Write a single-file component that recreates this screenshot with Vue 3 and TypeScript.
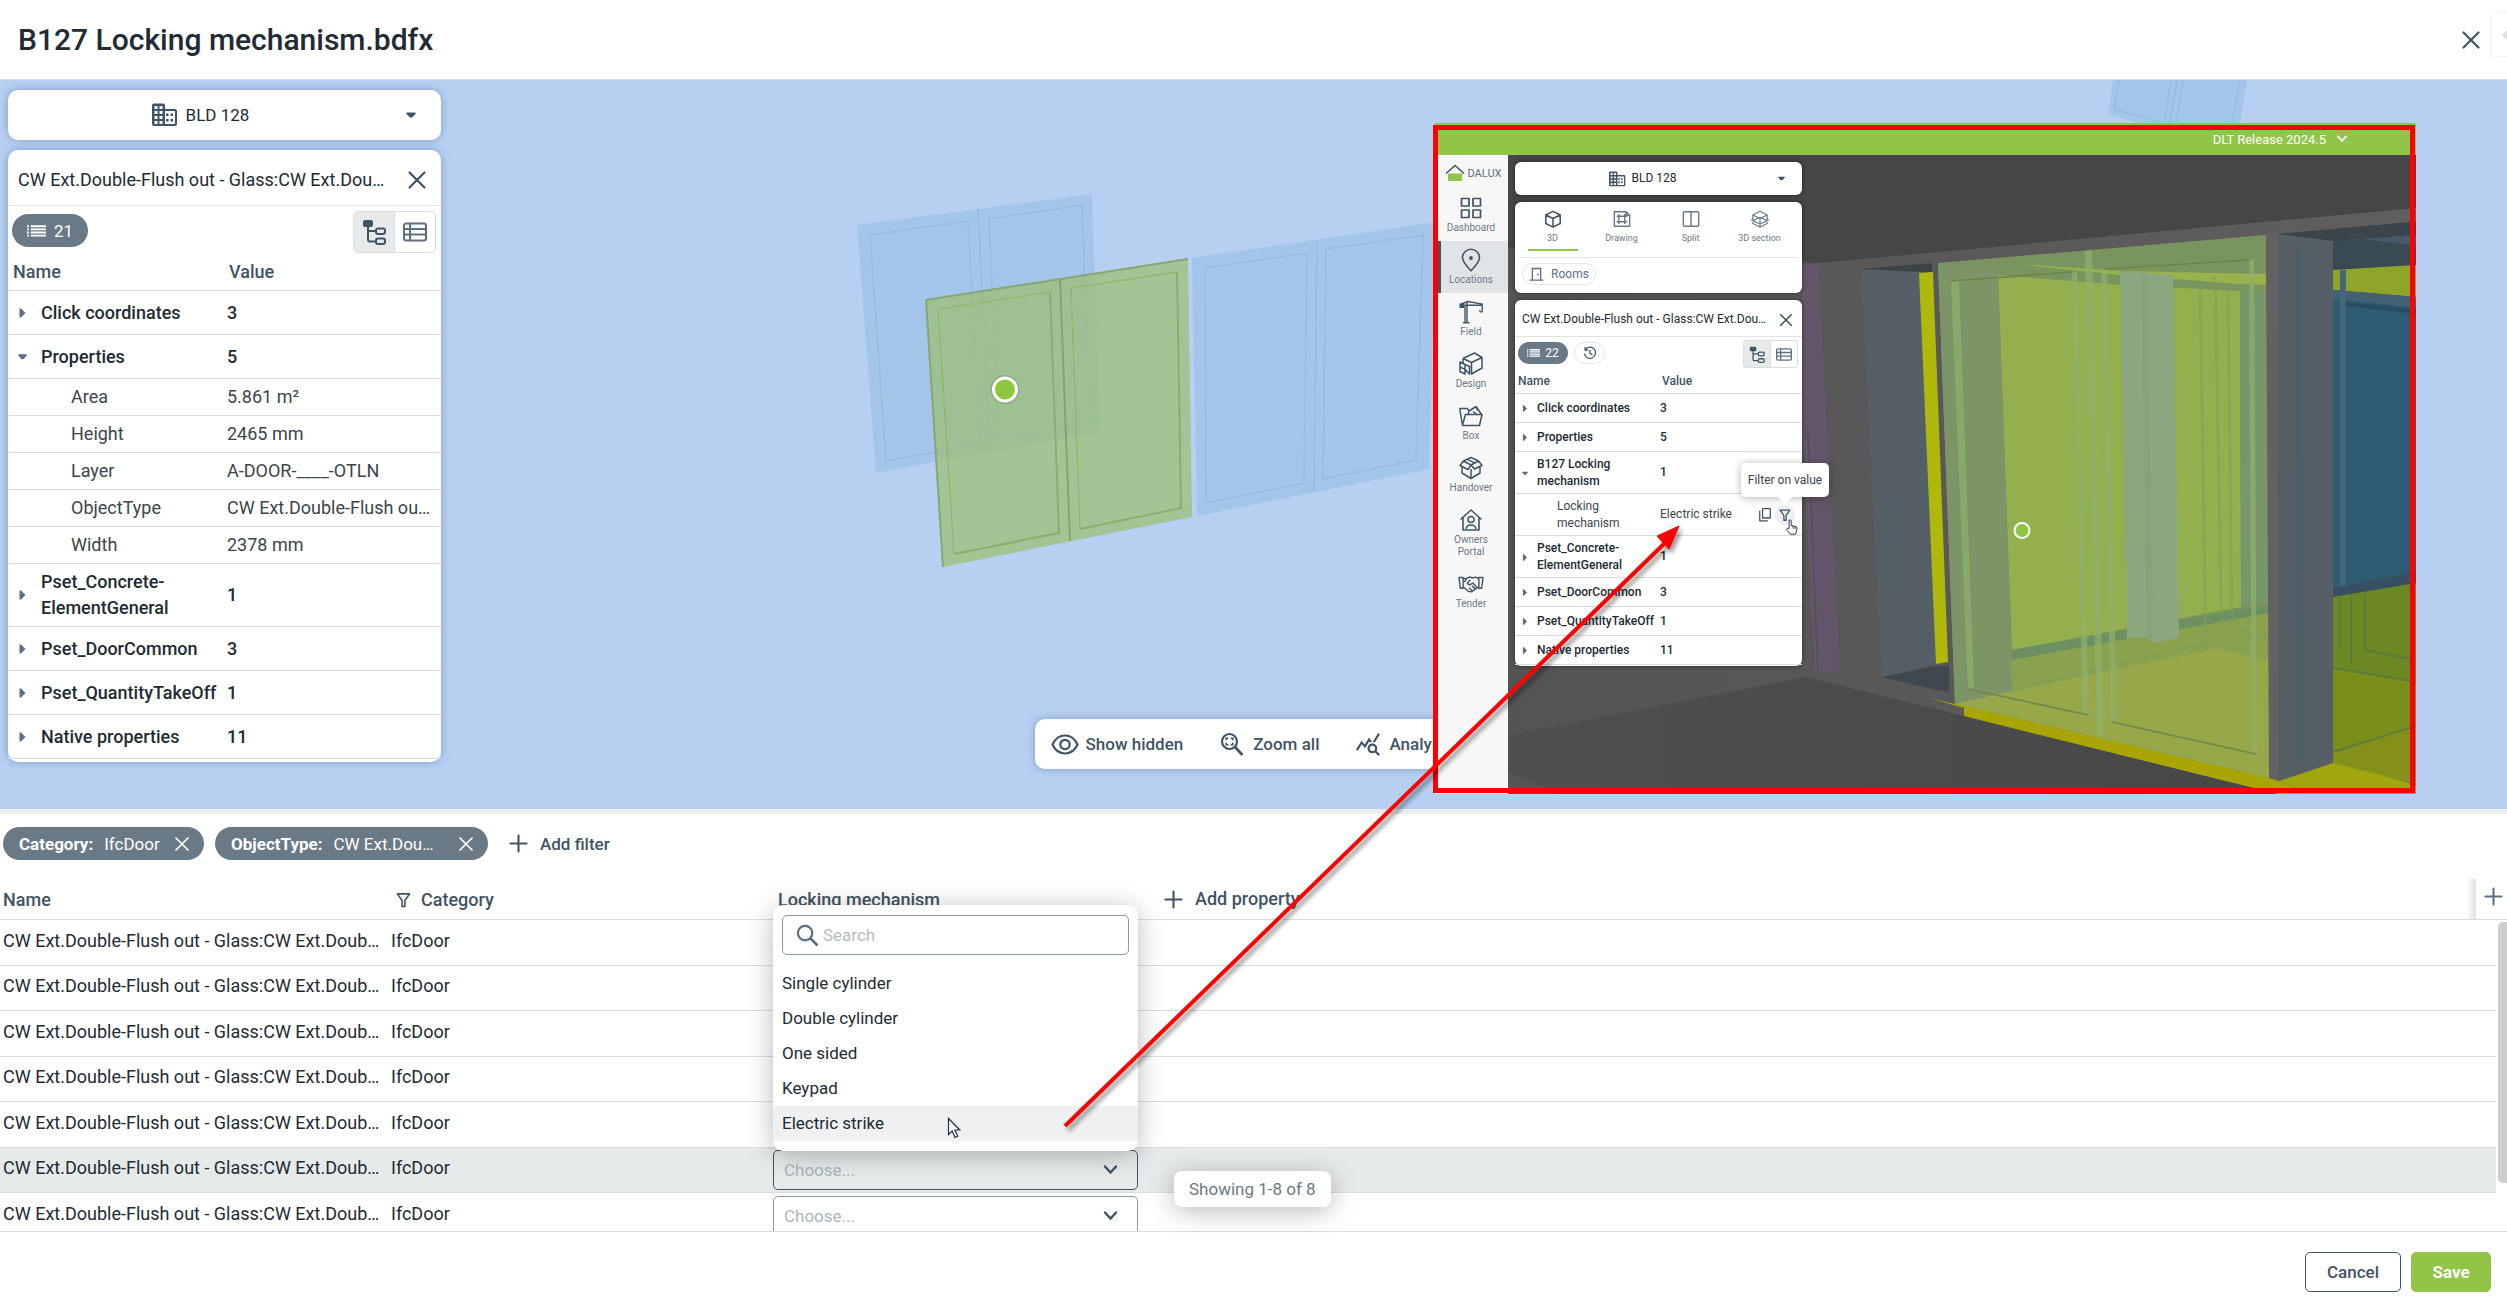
<script setup lang="ts">
import { ref } from 'vue'

interface PropertyRow {
  name: string
  value: string
  kind: 'group' | 'child'
  open?: boolean
  tall?: boolean
  actions?: boolean
}

const elementName = 'CW Ext.Double-Flush out - Glass:CW Ext.Dou…'

const properties: PropertyRow[] = [
  { name: 'Click coordinates', value: '3', kind: 'group' },
  { name: 'Properties', value: '5', kind: 'group', open: true },
  { name: 'Area', value: '5.861 m²', kind: 'child' },
  { name: 'Height', value: '2465 mm', kind: 'child' },
  { name: 'Layer', value: 'A-DOOR-____-OTLN', kind: 'child' },
  { name: 'ObjectType', value: 'CW Ext.Double-Flush ou…', kind: 'child' },
  { name: 'Width', value: '2378 mm', kind: 'child' },
  { name: 'Pset_Concrete-ElementGeneral', value: '1', kind: 'group', tall: true },
  { name: 'Pset_DoorCommon', value: '3', kind: 'group' },
  { name: 'Pset_QuantityTakeOff', value: '1', kind: 'group' },
  { name: 'Native properties', value: '11', kind: 'group' },
]

const insetProperties: PropertyRow[] = [
  { name: 'Click coordinates', value: '3', kind: 'group' },
  { name: 'Properties', value: '5', kind: 'group' },
  { name: 'B127 Locking mechanism', value: '1', kind: 'group', open: true, tall: true },
  { name: 'Locking mechanism', value: 'Electric strike', kind: 'child', tall: true, actions: true },
  { name: 'Pset_Concrete-ElementGeneral', value: '1', kind: 'group', tall: true },
  { name: 'Pset_DoorCommon', value: '3', kind: 'group' },
  { name: 'Pset_QuantityTakeOff', value: '1', kind: 'group' },
  { name: 'Native properties', value: '11', kind: 'group' },
]

const navItems = [
  { icon: 'dashboard', label: 'Dashboard' },
  { icon: 'pin', label: 'Locations', active: true },
  { icon: 'crane', label: 'Field' },
  { icon: 'design', label: 'Design' },
  { icon: 'folder', label: 'Box' },
  { icon: 'handover', label: 'Handover' },
  { icon: 'owners', label: 'Owners Portal' },
  { icon: 'handshake', label: 'Tender' },
]

const viewTabs = [
  { icon: 'cube', label: '3D', active: true },
  { icon: 'drawing', label: 'Drawing' },
  { icon: 'split', label: 'Split' },
  { icon: 'section', label: '3D section' },
]

const tools = [
  { icon: 'eye', label: 'Show hidden' },
  { icon: 'zoomall', label: 'Zoom all' },
  { icon: 'analyze', label: 'Analyze' },
]

const filters = [
  { key: 'Category:', value: 'IfcDoor', wide: false },
  { key: 'ObjectType:', value: 'CW Ext.Dou…', wide: true },
]

const visibleRows = 7
const doors = Array.from({ length: visibleRows }, (_, i) => ({
  id: i,
  name: 'CW Ext.Double-Flush out - Glass:CW Ext.Doub…',
  category: 'IfcDoor',
}))
const activeDoor = 5

const options = ['Single cylinder', 'Double cylinder', 'One sided', 'Keypad', 'Electric strike']
const hovered = ref('Electric strike')
const search = ref('')
</script>

<template>
  <div class="page">
    <svg class="sprite" aria-hidden="true">
      <symbol id="close" viewBox="0 0 20 20"><path d="M2.5 2.5l15 15M17.5 2.5l-15 15" fill="none" stroke="currentColor" stroke-width="2.2" stroke-linecap="round" /></symbol>
      <symbol id="plus" viewBox="0 0 20 20"><path d="M10 1.5v17M1.5 10h17" fill="none" stroke="currentColor" stroke-width="2.2" stroke-linecap="round" /></symbol>
      <symbol id="building" viewBox="0 0 26 24">
        <path d="M2 .5h9a2 2 0 0 1 2 2V6h10a2 2 0 0 1 2 2v13a2 2 0 0 1-2 2H2a2 2 0 0 1-2-2V2.5a2 2 0 0 1 2-2z" fill="currentColor" />
        <path d="M2.5 3h3v3h-3zM7.5 3h3v3h-3zM2.5 8h3v3h-3zM7.5 8h3v3h-3zM2.5 13h3v3h-3zM7.5 13h3v3h-3zM2.5 18h3v3h-3zM7.5 18h3v3h-3zM13 8h10v13H13z" fill="#fff" />
        <path d="M14 10.5h2.5V13H14zM18.5 10.5H21V13h-2.5zM14 16h2.5v2.5H14zM18.5 16H21v2.5h-2.5z" fill="currentColor" />
      </symbol>
      <symbol id="caret" viewBox="0 0 10 10"><path d="M.5 2.500h9v1.500L6 7.500H4L.5 4z" fill="currentColor" /></symbol>
      <symbol id="list" viewBox="0 0 20 12"><path d="M0 0h2v2H0zM4 0h16v2H4zM0 3.300h2v2H0zM4 3.300h16v2H4zM0 6.600h2v2H0zM4 6.600h16v2H4zM0 9.900h2v2H0zM4 9.900h16v2H4z" fill="currentColor" /></symbol>
      <symbol id="tree" viewBox="0 0 24 26">
        <rect x="1" y="1" width="10" height="7" rx="2" fill="currentColor" />
        <path d="M6 7v13.500a2 2 0 0 0 2 2h6M6 12h8" fill="none" stroke="currentColor" stroke-width="2" />
        <rect x="14" y="9.500" width="9" height="5.500" rx="2" fill="none" stroke="currentColor" stroke-width="2" />
        <rect x="14" y="19.500" width="9" height="5.500" rx="2" fill="none" stroke="currentColor" stroke-width="2" />
      </symbol>
      <symbol id="rows" viewBox="0 0 24 20"><path d="M3 1.500h18a2 2 0 0 1 2 2v13a2 2 0 0 1-2 2H3a2 2 0 0 1-2-2v-13a2 2 0 0 1 2-2zM7 1.500v17M1 7h22M1 12.500h22" fill="none" stroke="currentColor" stroke-width="2" /></symbol>
      <symbol id="right" viewBox="0 0 8 10"><path d="M1 .5h1.500L7 5 2.500 9.500H1z" fill="currentColor" /></symbol>
      <symbol id="down" viewBox="0 0 10 8"><path d="M.5 1h9v1.500L6 6.500H4L.5 2.500z" fill="currentColor" /></symbol>
      <symbol id="chevron" viewBox="0 0 16 16"><path d="M2.500 4.500L8 10.500l5.500-6" fill="none" stroke="currentColor" stroke-width="2.400" stroke-linecap="round" /></symbol>
      <symbol id="eye" viewBox="0 0 28 22"><path d="M1.500 11C4 5.500 8.500 2 14 2s10 3.500 12.500 9C24 16.500 19.500 20 14 20S4 16.500 1.500 11z" fill="none" stroke="currentColor" stroke-width="2.200" /><circle cx="14" cy="11" r="4.700" fill="none" stroke="currentColor" stroke-width="2.200" /></symbol>
      <symbol id="zoomall" viewBox="0 0 28 24"><circle cx="11.500" cy="9" r="7.500" fill="none" stroke="currentColor" stroke-width="2.200" /><path d="M17 14.500l7.500 8" stroke="currentColor" stroke-width="2.600" /><path d="M8.200 7.800V5.700h2.100M12.700 5.700h2.100v2.100M14.800 10.200v2.100h-2.100M10.300 12.300H8.200v-2.100" fill="none" stroke="currentColor" stroke-width="1.600" /></symbol>
      <symbol id="analyze" viewBox="0 1 24 23"><path fill="currentColor" d="M19.880 18.470c.44-.7.7-1.510.7-2.390 0-2.490-2.010-4.500-4.500-4.500s-4.500 2.010-4.500 4.500 2.010 4.500 4.490 4.500c.88 0 1.700-.26 2.390-.7L21.580 23 23 21.580l-3.120-3.110zm-3.800.11c-1.380 0-2.500-1.120-2.500-2.500s1.120-2.500 2.500-2.500 2.500 1.120 2.500 2.500-1.120 2.500-2.500 2.500zm-.36-8.500c-.74.02-1.450.18-2.100.45l-.55-.83-3.800 6.180-3.010-3.520-3.630 5.810L1 17l5-8 3 3.500L13 6l2.720 4.080zm2.590.5c-.64-.28-1.330-.45-2.050-.49L21.380 2 23 3.180l-4.690 7.400z" /></symbol>
      <symbol id="filter" viewBox="0 0 16 16"><path d="M1.500 1.500h13L9.500 8.500V15h-3V8.500z" fill="none" stroke="currentColor" stroke-width="1.700" stroke-linejoin="round" /></symbol>
      <symbol id="search" viewBox="0 0 24 24"><circle cx="9.500" cy="9.500" r="7.500" fill="none" stroke="currentColor" stroke-width="2.300" /><path d="M15 15l7.500 7.500" stroke="currentColor" stroke-width="2.800" /></symbol>
      <symbol id="dashboard" viewBox="0 0 24 24"><path d="M2.500 2.500h7.500v7.500H2.500zM14 2.500h7.500v7.500H14zM2.500 14h7.500v7.500H2.500zM14 14h7.500v7.500H14z" fill="none" stroke="currentColor" stroke-width="1.700" stroke-linejoin="round" /></symbol>
      <symbol id="pin" viewBox="0 0 24 24"><path d="M12 22.800C7 17.500 3.500 13.700 3.500 9.700a8.500 8.500 0 0 1 17 0c0 4-3.500 7.800-8.500 13.100z" fill="none" stroke="currentColor" stroke-width="1.600" /><circle cx="12" cy="10" r="1.900" fill="currentColor" /></symbol>
      <symbol id="crane" viewBox="0 0 24 24"><path d="M.5 3.500h4.500v4.500H.5z" fill="currentColor" /><path d="M2 4l7-2.500L23.200 4v7.500c-1.500 1-2.500 0-2.500-1.200M3 5.200h20M8 1.500v21M6 5.500v17M4 22.800h6.500" fill="none" stroke="currentColor" stroke-width="1.400" /></symbol>
      <symbol id="design" viewBox="0 0 24 24"><path d="M4 6.500L15.500 1 23 5.500v10.500L12.500 22V10.500L23 5.500M12.500 10.500L4 6.500M4 6.500V11M1 10l5 2.500v9.500L1 19.500zM6 12.500l4.500 2V22L6 17.200M1 14.800l5 2.500" fill="none" stroke="currentColor" stroke-width="1.500" stroke-linejoin="round" /></symbol>
      <symbol id="folder" viewBox="0 0 24 24"><path d="M3.500 21.500L1 6.500V4.500h7l2 2.500M3.500 21.500h17l2.500-11H6.500L3.500 21M9 10.500L10 7l7-4.500 5.500 8M14 7.500l4 3M17 2.500l1.500 4" fill="none" stroke="currentColor" stroke-width="1.500" stroke-linejoin="round" /></symbol>
      <symbol id="handover" viewBox="0 0 24 24"><path d="M3 11v6l9 5.500 9-5.500v-6M12 13v9.500M1 9.500L4.500 5 12 1.500 19.500 5 23 9.500 15.500 13 12 9 9 13.500zM4.500 5L12 9l7.500-4M8 3.200l8 4" fill="none" stroke="currentColor" stroke-width="1.500" stroke-linejoin="round" /></symbol>
      <symbol id="owners" viewBox="0 0 24 24"><path d="M1.500 11.500L12 2l10.500 9.500M4 9.500v12.500h16V9.500" fill="none" stroke="currentColor" stroke-width="1.600" stroke-linejoin="round" /><circle cx="12" cy="11.500" r="3" fill="none" stroke="currentColor" stroke-width="1.500" /><path d="M7 21c.5-3 2.500-4 5-4s4.500 1 5 4" fill="none" stroke="currentColor" stroke-width="1.500" /></symbol>
      <symbol id="handshake" viewBox="0 0 28 20"><path d="M1 3h4.500v11.500H2.500zM27 3h-4.500v11.500h3zM5.500 4h4l3-1.500 3.500 1 3-1 3.500 2M5.500 13l6 5 3 .5 5-3.500 3-2M13 5.500l-3 4 2.500 1.500 3.500-2 4.500 5M12 14l3 3M15 12l3.500 3.500M9 4l-2 4" fill="none" stroke="currentColor" stroke-width="1.500" stroke-linejoin="round" /></symbol>
      <symbol id="cube" viewBox="0 0 20 20"><path d="M10 1.500l8 4v9.500l-8 4-8-4V5.500zM2 5.500l8 4 8-4M10 9.500V19" fill="none" stroke="currentColor" stroke-width="1.700" stroke-linejoin="round" /></symbol>
      <symbol id="drawing" viewBox="0 0 20 20"><path d="M1.500 2h13l4 4v12h-17zM6.500 4.500v11M13 4.500v11M4 7h12M4 13h12M14.500 2v4h4" fill="none" stroke="currentColor" stroke-width="1.600" /></symbol>
      <symbol id="split" viewBox="0 0 20 20"><rect x="1.500" y="2" width="17" height="16" rx="1" fill="none" stroke="currentColor" stroke-width="1.600" /><path d="M10 2v16" stroke="currentColor" stroke-width="1.600" /></symbol>
      <symbol id="section" viewBox="0 0 20 20"><path d="M10 1.500l8 4v9.500l-8 4-8-4V5.500zM2 5.500l8 4 8-4M10 9.500V19M0 11l10 4.500L20 11M3 11.500L10 8l7 3.500" fill="none" stroke="currentColor" stroke-width="1.300" stroke-linejoin="round" /></symbol>
      <symbol id="room" viewBox="0 0 20 20"><path d="M4.500 17.500V2h11v15.500M1 17.500h18" fill="none" stroke="currentColor" stroke-width="1.800" /><circle cx="12" cy="10" r="1.200" fill="currentColor" /></symbol>
      <symbol id="history" viewBox="0 0 20 20"><path d="M3 5.500A8 8 0 1 1 2 11M3 1.500v4.500h4.500M10 5.500V10.500l3.500 2.500" fill="none" stroke="currentColor" stroke-width="1.800" /></symbol>
      <symbol id="copy" viewBox="0 0 20 20"><path d="M6.500 1.500h11v13.500h-11zM2.500 4.500v14.500h11.500" fill="none" stroke="currentColor" stroke-width="1.800" stroke-linejoin="round" /></symbol>
    </svg>

    <header class="titlebar">
      <h1>B127 Locking mechanism.bdfx</h1>
      <button class="icon-button" type="button" aria-label="Close"><svg class="i20"><use href="#close" /></svg></button>
      <span class="edge-box"><i></i></span>
    </header>

    <main class="viewer">
      <svg class="model" viewBox="0 80 2507 729" preserveAspectRatio="xMinYMin slice" aria-hidden="true">
        <g fill="#a4c5ea" stroke="#94bae3" stroke-width="1.400">
          <path stroke="none" d="M857 225L1092 194 1100 432 876 473z" />
          <path fill="none" d="M978 209L990 452M870 235L968 221 980 444 886 461zM989 219L1082 205 1090 424 999 440z" />
          <path stroke="none" d="M1192 258L1436 222 1429 469 1197 516z" />
          <path fill="none" d="M1317 240L1314 492M1205 268L1307 253 1304 483 1206 503zM1326 249L1423 235 1416 460 1323 479z" />
          <path stroke="none" d="M2113 80L2108 114 2141 124H2240L2247 80z" />
          <path fill="none" d="M2119 80L2114 109 2166 124M2171 80L2164 124M2177 80L2170 124M2183 80L2176 124M2240 80L2232 124" />
        </g>
        <path d="M926 300L1188 259 1192 517 943 567z" fill="#9abf66" fill-opacity=".66" />
        <path d="M926 300L1188 259M926 300L943 567" fill="none" stroke="#86a673" stroke-width="2" />
        <path d="M1060 279L1070 541" stroke="#84a66c" stroke-width="2" />
        <path d="M1050 292L1059 533 954 554M1177 272L1181 508 1080 529" fill="none" stroke="#8cad70" stroke-width="2" />
        <path d="M954 554L938 309 1050 292M1080 529L1071 288 1177 272" fill="none" stroke="#92b76f" stroke-width="1.400" />
        <circle cx="1005" cy="389.500" r="14.500" fill="#4f6e4f" opacity=".25" />
        <circle cx="1005" cy="389.500" r="11.500" fill="#8dc63f" stroke="#fff" stroke-width="3" />
      </svg>

      <aside class="side">
        <button class="card picker" type="button">
          <svg class="i-building"><use href="#building" /></svg><span>BLD 128</span>
          <svg class="picker-caret"><use href="#caret" /></svg>
        </button>
        <section class="card props">
          <header class="props-head">
            <h2>{{ elementName }}</h2>
            <button class="icon-button" type="button" aria-label="Close panel"><svg class="i20"><use href="#close" /></svg></button>
          </header>
          <div class="props-bar">
            <button class="count" type="button"><svg><use href="#list" /></svg>21</button>
            <div class="toggle">
              <button class="on" type="button" aria-label="Tree view"><svg><use href="#tree" /></svg></button>
              <button type="button" aria-label="List view"><svg><use href="#rows" /></svg></button>
            </div>
          </div>
          <table class="ptable">
            <thead><tr><th>Name</th><th class="val">Value</th></tr></thead>
            <tbody>
              <tr v-for="row in properties" :key="row.name" :class="[row.kind, { tall: row.tall }]">
                <td>
                  <svg v-if="row.kind === 'group'" class="arrow"><use :href="row.open ? '#down' : '#right'" /></svg>
                  <span>{{ row.name }}</span>
                </td>
                <td>{{ row.value }}</td>
              </tr>
            </tbody>
          </table>
        </section>
      </aside>

      <nav class="card tools">
        <button v-for="tool in tools" :key="tool.icon" type="button">
          <svg><use :href="'#' + tool.icon" /></svg>{{ tool.label }}
        </button>
      </nav>
    </main>

    <section class="data">
      <div class="filters">
        <span v-for="f in filters" :key="f.key" class="chip" :class="{ wide: f.wide }">
          <b>{{ f.key }}</b><span>{{ f.value }}</span>
          <button type="button" aria-label="Remove filter"><svg><use href="#close" /></svg></button>
        </span>
        <button class="add" type="button"><svg><use href="#plus" /></svg>Add filter</button>
      </div>

      <div class="grid-wrap">
        <table class="grid">
          <colgroup><col class="c1" /><col class="c2" /><col class="c3" /><col /><col class="c5" /><col class="c6" /></colgroup>
          <thead>
            <tr>
              <th>Name</th>
              <th class="cat"><svg><use href="#filter" /></svg>Category</th>
              <th class="lock">Locking mechanism</th>
              <th class="more"><button class="add" type="button"><svg><use href="#plus" /></svg>Add property</button></th>
              <th class="pin-add" colspan="2"><button type="button" aria-label="Add column"><svg><use href="#plus" /></svg></button></th>
            </tr>
          </thead>
          <tbody>
            <tr v-for="door in doors" :key="door.id" :class="{ active: door.id === activeDoor }">
              <td>{{ door.name }}</td>
              <td>{{ door.category }}</td>
              <td class="pick">
                <div class="choose">
                  <select aria-label="Locking mechanism"><option>Choose...</option></select>
                  <svg><use href="#chevron" /></svg>
                </div>
              </td>
              <td></td><td></td><td class="gutter"></td>
            </tr>
          </tbody>
        </table>
        <div class="scrollbar"></div>
      </div>

      <div class="menu">
        <label class="menu-search">
          <svg><use href="#search" /></svg>
          <input v-model="search" type="text" placeholder="Search" aria-label="Search" />
        </label>
        <ul role="listbox">
          <li v-for="o in options" :key="o" role="option" :class="{ hover: o === hovered }" @mouseenter="hovered = o">{{ o }}</li>
        </ul>
      </div>
      <div class="toast">Showing 1-8 of 8</div>
      <svg class="pointer" viewBox="0 0 14 22" aria-hidden="true"><path d="M1.500 1.500v16l3.700-3.500 2.800 6.500 2.700-1.200-2.800-6.300h4.900z" fill="#fff" stroke="#1f2a44" stroke-width="1.200" /></svg>
    </section>

    <footer class="actions">
      <button class="cancel" type="button">Cancel</button>
      <button class="save" type="button">Save</button>
    </footer>

    <section class="inset">
      <header class="release">DLT Release 2024.5 <svg><use href="#chevron" /></svg></header>
      <div class="inset-body">
        <nav class="rail">
          <div class="logo">
            <svg viewBox="0 0 20 18" aria-hidden="true"><path d="M3 9.500h14V17H3z" fill="#91c547" /><path d="M1 9.500L10 1.500l9 8" fill="none" stroke="#3f5465" stroke-width="1.500" /></svg>
            <span>DALUX</span>
          </div>
          <a v-for="n in navItems" :key="n.icon" href="#" :class="{ active: n.active }">
            <svg><use :href="'#' + n.icon" /></svg><span>{{ n.label }}</span>
          </a>
        </nav>
        <div class="stage">
          <svg class="room" viewBox="1508 155 908 639" preserveAspectRatio="xMinYMin slice" aria-hidden="true">
            <defs>
              <linearGradient id="ground" x1="0" x2="1"><stop offset="0" stop-color="#4f4f4f" /><stop offset="1" stop-color="#474747" /></linearGradient>
              <linearGradient id="wall" x1="0" x2="1"><stop offset="0" stop-color="#545454" /><stop offset="1" stop-color="#605e5e" /></linearGradient>
            </defs>
            <path d="M1508 155h908v639h-908z" fill="url(#wall)" />
            <path d="M1508 155H2416V208L1818 263 1508 248z" fill="#464646" />
            <path d="M1802 265L1818 263 1840 671 1815 674 1802 430z" fill="#64566a" />
            <path d="M1808 430L1818 673" stroke="#584a5e" stroke-width="1.500" />
            <path d="M1861 269L1919 272 1936 663 1882 677z" fill="#555f68" />
            <path d="M1861 269L1932 263V272H1919z" fill="#3c444a" />
            <path d="M1919 273L1933 272 1948 662 1936 664z" fill="#b0b80c" />
            <path d="M1882 677L1936 666H1949V693z" fill="#40484f" />
            <path d="M1508 735L1806 677 1964 716 2280 794H1508z" fill="url(#ground)" />
            <path d="M1508 772L1560 794H1508z" fill="#565656" />
            <path d="M1938 263L2266 235 2269 778 1955 704z" fill="#7a945f" />
            <path d="M2016 264L2120 271 2266 274V285L2239 284 2120 275z" fill="#98b34c" />
            <path d="M1998 275L2120 285 2240 291 2241 607 2012 650z" fill="#94af4e" />
            <path d="M2240 290L2266 293 2269 600 2241 606z" fill="#77976b" />
            <path d="M2012 650L2269 605V615L2012 660z" fill="#6d9063" />
            <path d="M2012 660L2269 613V778L1955 704z" fill="#8aa14e" />
            <path d="M2012 691L2219 648 2269 658V778L1955 704z" fill="#97a84b" />
            <path d="M1938 263L1998 267 2012 691 1955 704z" fill="#7d9566" />
            <path d="M2120 271L2173 275 2179 638 2152 643 2148 637 2127 638z" fill="#8ba77f" />
            <path d="M2144 273L2150 640" stroke="#82a07d" stroke-width="6" opacity=".6" />
            <g fill="none" stroke="#7b9f55" stroke-width="3" opacity=".5"><path d="M2200 280L2206 650M2215 277L2222 650M2228 290L2232 628M2012 691L2206 643M2222 648L2269 660M2232 628L2269 640" /></g>
            <g fill="#8eb06c" opacity=".7">
              <path d="M1951 281L1959 281 1974 688 1968 690zM2085 251L2092 250 2104 736 2097 737zM2072 273L2077 272 2089 715 2083 714zM2101 271L2107 270 2117 722 2111 721zM2249 261L2254 260 2257 753 2252 754z" />
            </g>
            <path d="M1951 281L2072 272M2107 269L2249 260M1968 689L2088 715M2112 722L2256 754" fill="none" stroke="#6c8548" stroke-width="1.600" />
            <path d="M1929 698L1955 704 2269 778 2312 794H2278L1964 716V708z" fill="#a8a504" />
            <path d="M2269 778L2333 760 2416 785V794H2312z" fill="#a0a60e" />
            <path d="M2266 233H2277L2279 781 2269 778z" fill="#636162" />
            <path d="M2277 234L2333 241V763L2279 781z" fill="#555e65" />
            <path d="M2298 250L2300 765" stroke="#466073" stroke-width="4" opacity=".6" />
            <path d="M2277 234L2410 222H2416V235L2333 241z" fill="#3c454b" />
            <path d="M2333 241L2416 235V267L2333 270z" fill="#3a4a53" />
            <path d="M2363 239L2416 235V246z" fill="#455968" />
            <path d="M2333 270L2416 265V297L2333 290z" fill="#8ea529" />
            <path d="M2333 290L2416 297V582L2333 597z" fill="#2f5b73" />
            <path d="M2333 290L2416 297V308L2333 298z" fill="#446173" />
            <path d="M2346 302L2416 309V314L2346 306z" fill="#284c60" />
            <path d="M2340 270H2346V588L2340 590z" fill="#456578" />
            <path d="M2333 588L2416 572V584L2333 597z" fill="#374f60" />
            <path d="M2333 597L2416 583V700L2333 668z" fill="#6c8824" />
            <path d="M2333 668L2416 682V730L2333 752z" fill="#7a8f1b" />
            <path d="M2333 752L2416 726V784L2333 763z" fill="#85901a" />
            <path d="M2340 597V647M2351 594V664M2365 592V650L2416 660M2333 668L2416 682M2333 752L2416 726" fill="none" stroke="#507546" stroke-width="2" opacity=".7" />
            <circle cx="2022" cy="530.500" r="7.500" fill="#8dc63f" stroke="#fff" stroke-width="2" />
          </svg>

          <div class="inset-side">
            <button class="card picker" type="button">
              <svg class="i-building"><use href="#building" /></svg><span>BLD 128</span>
              <svg class="picker-caret"><use href="#caret" /></svg>
            </button>
            <section class="card views">
              <div class="tabs">
                <button v-for="t in viewTabs" :key="t.icon" type="button" :class="{ active: t.active }">
                  <svg><use :href="'#' + t.icon" /></svg><span>{{ t.label }}</span>
                </button>
              </div>
              <button class="rooms" type="button"><svg><use href="#room" /></svg>Rooms</button>
            </section>
            <section class="card props">
              <header class="props-head">
                <h2>{{ elementName }}</h2>
                <button class="icon-button" type="button" aria-label="Close panel"><svg class="i20"><use href="#close" /></svg></button>
              </header>
              <div class="props-bar">
                <button class="count" type="button"><svg><use href="#list" /></svg>22</button>
                <button class="history" type="button" aria-label="History"><svg><use href="#history" /></svg></button>
                <div class="toggle">
                  <button class="on" type="button" aria-label="Tree view"><svg><use href="#tree" /></svg></button>
                  <button type="button" aria-label="List view"><svg><use href="#rows" /></svg></button>
                </div>
              </div>
              <table class="ptable">
                <thead><tr><th>Name</th><th class="val">Value</th></tr></thead>
                <tbody>
                  <tr v-for="row in insetProperties" :key="row.name" :class="[row.kind, { tall: row.tall }]">
                    <td>
                      <svg v-if="row.kind === 'group'" class="arrow"><use :href="row.open ? '#down' : '#right'" /></svg>
                      <span>{{ row.name }}</span>
                    </td>
                    <td>
                      <div class="cell">
                        <span>{{ row.value }}</span>
                        <div v-if="row.actions" class="row-actions">
                          <button type="button" aria-label="Copy"><svg><use href="#copy" /></svg></button>
                          <button class="round" type="button" aria-label="Filter"><svg><use href="#filter" /></svg></button>
                          <span class="tip" role="tooltip">Filter on value</span>
                          <svg class="hand" viewBox="0 0 16 20" aria-hidden="true"><path d="M5 12V2.500a1.300 1.300 0 0 1 2.600 0V8l6 1.500c1 .3 1.400 1 1.300 2l-.7 4.500-1.200 3H6.500L1.500 13c.7-1.500 2-1.500 3.500-1zM10 9v3M12.500 9.500v3" fill="#fff" stroke="#25304a" stroke-width="1.200" /></svg>
                        </div>
                      </div>
                    </td>
                  </tr>
                </tbody>
              </table>
            </section>
          </div>
        </div>
      </div>
      <div class="frame"></div>
    </section>

    <svg class="callout" aria-hidden="true">
      <path d="M1065 1126L1668 540" stroke="#f00" stroke-width="4" />
      <path d="M1679 526L1657 536 1669 549z" fill="#f00" stroke="#f00" />
    </svg>
  </div>
</template>

<style>
body {
  margin: 0;
  background: #fff;
}
</style>

<style scoped>
.page {
  position: relative;
  display: flex;
  flex-direction: column;
  height: 100vh;
  min-height: 1100px;
  overflow: hidden;
  font-family: Roboto, "Liberation Sans", sans-serif;
  font-size: 17px;
  line-height: 24px;
  color: #212b33;
}
.page * {
  box-sizing: border-box;
}
.sprite {
  position: absolute;
  width: 0;
  height: 0;
}
button {
  padding: 0;
  border: 0;
  background: none;
  color: #3f5465;
  font: inherit;
}
svg {
  display: block;
  flex: none;
}
h1,
h2,
ul {
  margin: 0;
  padding: 0;
}

/* title bar */
.titlebar {
  display: flex;
  flex: none;
  align-items: center;
  height: 80px;
  padding-left: 18px;
  border-bottom: 1px solid #d8dedf;
}
h1 {
  flex: 1;
  font-size: 30px;
  font-weight: 500;
  line-height: 40px;
}
.icon-button {
  display: flex;
  align-items: center;
  justify-content: center;
}
.i20 {
  width: 20px;
  height: 20px;
}
.edge-box {
  display: flex;
  align-items: center;
  justify-content: flex-end;
  width: 17px;
  height: 45px;
  margin: 0 0 10px 9px;
  overflow: hidden;
  border: 1px solid #f4f5f5;
  border-right: 0;
}
.edge-box i {
  flex: none;
  width: 10px;
  height: 10px;
  margin-right: -7px;
  background: #dcdfe1;
  transform: rotate(45deg);
}

/* viewer */
.viewer {
  position: relative;
  display: flex;
  flex: 729 1 0;
  min-height: 0;
  background: #b7d0f2;
}
.model {
  position: absolute;
  inset: 0;
  width: 100%;
  height: 100%;
}
.card {
  border-radius: 10px;
  background: #fff;
  box-shadow: 0 0 8px rgba(50, 80, 130, 0.4);
}
.side {
  position: relative;
  display: flex;
  flex-direction: column;
  gap: 10px;
  width: 433px;
  margin: 10px 8px;
}
.picker {
  position: relative;
  display: flex;
  align-items: center;
  justify-content: center;
  gap: 8px;
  height: 50px;
  padding-right: 48px;
  color: #212b33;
}
.i-building {
  width: 26px;
  height: 24px;
  color: #3f5465;
}
.picker-caret {
  position: absolute;
  right: 25px;
  width: 10px;
  height: 10px;
  color: #3f5465;
}
.props {
  padding-bottom: 3px;
}
.props-head {
  display: flex;
  align-items: center;
  justify-content: space-between;
  height: 56px;
  padding: 4px 14px 0 10px;
  border-bottom: 1px solid #dfe3e5;
}
h2 {
  font-size: 18px;
  font-weight: 400;
  line-height: 24px;
  white-space: nowrap;
}
.props-bar {
  display: flex;
  align-items: flex-start;
  height: 47px;
  padding: 5px 5px 0 4px;
}
.count {
  display: flex;
  align-items: center;
  justify-content: center;
  gap: 8px;
  width: 76px;
  height: 33px;
  margin-top: 3px;
  border-radius: 17px;
  background: #6a7986;
  color: #fff;
}
.count svg {
  width: 19px;
  height: 12px;
}
.toggle {
  display: flex;
  width: 83px;
  height: 42px;
  margin-left: auto;
  overflow: hidden;
  border: 1px solid #d8dedf;
  border-radius: 5px;
}
.toggle button {
  display: flex;
  flex: 1;
  align-items: center;
  justify-content: center;
  color: #5c7080;
}
.toggle .on {
  border-right: 1px solid #d8dedf;
  background: #e6eaeb;
  color: #3f5465;
}
.toggle svg {
  width: 24px;
  height: 26px;
}
.ptable {
  width: 100%;
  border-spacing: 0;
  table-layout: fixed;
  font-size: 18px;
}
.ptable th {
  height: 38px;
  padding: 0 0 0 4px;
  border-bottom: 1px solid #d8dedf;
  color: #3f5465;
  font-weight: 500;
  text-align: left;
}
.ptable th:first-child {
  width: 217px;
  padding-left: 5px;
}
.ptable td {
  position: relative;
  height: 44px;
  padding: 0 0 0 2px;
  border-bottom: 1px solid #d8dedf;
}
.ptable .group td {
  font-weight: 500;
}
.ptable td:first-child {
  padding-left: 33px;
}
.ptable .child td {
  height: 37px;
  color: #3b454d;
}
.ptable .child td:first-child {
  padding-left: 63px;
}
.ptable .tall td {
  height: 63px;
  line-height: 26px;
}
.ptable .tall td:first-child {
  padding-right: 34px;
}
.arrow {
  position: absolute;
  top: 50%;
  left: 10px;
  width: 9px;
  height: 10px;
  margin-top: -5px;
  color: #5c7080;
}
.tools {
  position: absolute;
  bottom: 40px;
  left: 50%;
  display: flex;
  align-items: center;
  gap: 35px;
  width: 439px;
  height: 50px;
  margin-left: -219px;
  padding-left: 16px;
}
.tools button {
  display: flex;
  align-items: center;
  gap: 7px;
  font-weight: 500;
}
.tools svg {
  width: 28px;
  height: 25px;
}

/* data grid */
.data {
  position: relative;
  display: flex;
  flex: 417 1 0;
  flex-direction: column;
  min-height: 0;
  border-top: 5px solid #eaeef0;
}
.filters {
  display: flex;
  flex: none;
  align-items: center;
  gap: 11px;
  padding: 13px 3px 0;
}
.chip {
  display: flex;
  align-items: center;
  gap: 11px;
  width: 201px;
  height: 33px;
  padding: 0 14px 0 16px;
  border-radius: 17px;
  background: #6a7986;
  color: #fff;
}
.chip.wide {
  width: 273px;
}
.chip button {
  margin-left: auto;
  color: #fff;
}
.chip svg {
  width: 16px;
  height: 16px;
}
.add {
  display: flex;
  align-items: center;
  gap: 12px;
  margin-left: 10px;
  font-weight: 500;
}
.add svg {
  width: 19px;
  height: 19px;
}
.grid-wrap {
  position: relative;
  flex: 1;
  min-height: 0;
  margin-top: 19px;
  overflow: hidden;
}
.grid {
  width: 100%;
  border-spacing: 0;
  table-layout: fixed;
}
.c1 {
  width: 388px;
}
.c2,
.c3 {
  width: 385px;
}
.c5 {
  width: 20px;
}
.c6 {
  width: 11px;
}
.grid th {
  height: 41px;
  padding: 2px 3px 0;
  border-bottom: 1px solid #d8dedf;
  color: #3f5465;
  font-size: 18px;
  font-weight: 500;
  text-align: left;
}
.grid .cat svg {
  display: inline-block;
  width: 15px;
  height: 16px;
  margin: 0 10px 0 5px;
  vertical-align: -2px;
}
.grid .lock {
  padding-left: 5px;
}
.grid .more {
  padding: 0 0 0 6px;
}
.more .add {
  margin-left: 0;
}
.grid .pin-add {
  position: relative;
  padding: 0 0 0 8px;
}
.pin-add::before {
  position: absolute;
  top: 0;
  bottom: 0;
  left: -10px;
  width: 10px;
  background: linear-gradient(to right, #fff, #e2e2e2);
  content: "";
}
.pin-add svg {
  width: 19px;
  height: 19px;
  color: #5c7080;
}
.grid td {
  height: 45px;
  padding: 0 3px 4px;
  border-bottom: 1px solid #d8dedf;
  font-size: 18px;
  white-space: nowrap;
}
.grid tr:nth-child(odd) td {
  height: 46px;
}
.grid .active td {
  background: #e6eaeb;
}
.grid .pick {
  padding: 0;
  font-size: 17px;
}
.grid td.gutter {
  border: 0;
  background: #fff;
}
.choose {
  position: relative;
  width: 365px;
}
.choose select {
  width: 100%;
  height: 40px;
  padding: 0 10px;
  border: 1px solid #8b99a4;
  border-radius: 5px;
  background: transparent;
  color: #aab5bc;
  font: inherit;
  appearance: none;
}
.active .choose select {
  border-color: #3f5465;
}
.choose svg {
  position: absolute;
  top: 12px;
  right: 19px;
  width: 17px;
  height: 16px;
  color: #3f5465;
}
.scrollbar {
  position: absolute;
  top: 43px;
  right: 0;
  bottom: 48px;
  width: 9px;
  border-radius: 5px 0 0 5px;
  background: #cdcdcd;
}
.menu {
  position: absolute;
  top: 91px;
  left: 773px;
  width: 365px;
  padding: 10px 0;
  border-radius: 10px;
  background: #fff;
  box-shadow: 0 4px 26px rgba(0, 0, 0, 0.28);
}
.menu-search {
  display: flex;
  align-items: center;
  gap: 2px;
  height: 40px;
  margin: 0 9px 11px;
  padding-left: 13px;
  border: 1px solid #8b99a4;
  border-radius: 5px;
}
.menu-search svg {
  width: 23px;
  height: 23px;
  color: #5c7080;
}
.menu-search input {
  flex: 1;
  min-width: 0;
  border: 0;
  outline: 0;
  background: none;
  font: inherit;
}
.menu-search input::placeholder {
  color: #b3bdc4;
}
.menu li {
  height: 35px;
  padding-left: 9px;
  line-height: 35px;
  list-style: none;
}
.menu .hover {
  background: #eff0f2;
}
.toast {
  position: absolute;
  top: 357px;
  left: 1174px;
  padding: 6px 15px;
  border-radius: 8px;
  background: #fff;
  box-shadow: 0 4px 26px rgba(0, 0, 0, 0.28);
  color: #6a7986;
}
.pointer {
  position: absolute;
  top: 303px;
  left: 947px;
  width: 14px;
  height: 22px;
}

/* footer */
.actions {
  display: flex;
  flex: none;
  justify-content: flex-end;
  gap: 10px;
  height: 75px;
  padding: 20px 16px 0;
  border-top: 1px solid #d8dedf;
}
.actions button {
  width: 96px;
  height: 40px;
  border: 1px solid #3f5465;
  border-radius: 5px;
  font-weight: 500;
}
.actions .save {
  width: 80px;
  border-color: #91c547;
  background: #91c547;
  color: #fff;
  font-weight: 700;
}

/* product capture */
.inset {
  position: absolute;
  top: 123px;
  left: 1435px;
  display: flex;
  flex-direction: column;
  width: 981px;
  height: 671px;
  background: #464646;
  font-size: 12px;
  line-height: 17px;
}
.release {
  display: flex;
  align-items: center;
  justify-content: flex-end;
  gap: 10px;
  height: 32px;
  padding-right: 68px;
  background: #91c547;
  color: #fff;
  font-size: 13px;
}
.release svg {
  width: 12px;
  height: 12px;
}
.inset-body {
  display: flex;
  flex: 1;
  min-height: 0;
}
.rail {
  width: 73px;
  padding-left: 3px;
  background: #f7f7f7;
}
.logo {
  display: flex;
  align-items: center;
  justify-content: center;
  gap: 3px;
  height: 34px;
  padding-top: 2px;
  color: #5c7080;
  font-size: 11px;
}
.logo svg {
  width: 20px;
  height: 18px;
}
.rail a {
  display: flex;
  flex-direction: column;
  align-items: center;
  gap: 2px;
  padding: 7px 14px 7px 10px;
  color: #3f5465;
  font-size: 10px;
  line-height: 12px;
  text-align: center;
  text-decoration: none;
}
.rail a svg {
  width: 26px;
  height: 24px;
}
.rail a span {
  color: #6a7986;
}
.rail .active {
  background: #e1e4e6;
  box-shadow: inset 3px 0 #3f5465;
}
.stage {
  position: relative;
  flex: 1;
}
.room {
  position: absolute;
  inset: 0;
  width: 100%;
  height: 100%;
}
.inset-side {
  position: relative;
  display: flex;
  flex-direction: column;
  gap: 7px;
  width: 287px;
  margin: 7px;
}
.inset .card {
  border-radius: 6px;
  box-shadow: 0 0 4px rgba(0, 0, 0, 0.5);
}
.inset .picker {
  gap: 5px;
  height: 33px;
  padding-right: 31px;
}
.inset .i-building {
  width: 17px;
  height: 16px;
}
.inset .picker-caret {
  right: 17px;
  width: 7px;
  height: 7px;
}
.views {
  height: 91px;
  padding: 8px 4px 0 3px;
}
.tabs {
  display: flex;
  height: 48px;
  padding-right: 4px;
  border-bottom: 1px solid #e3e6e8;
}
.tabs button {
  display: flex;
  flex: 1;
  flex-direction: column;
  align-items: center;
  gap: 4px;
  color: #6a7986;
  font-size: 9px;
  line-height: 12px;
}
.tabs svg {
  width: 18px;
  height: 18px;
}
.tabs .active svg {
  color: #3f5465;
}
.tabs .active::after {
  width: 50px;
  height: 2px;
  margin-top: 1px;
  background: #91c547;
  content: "";
}
.rooms {
  display: flex;
  align-items: center;
  justify-content: center;
  gap: 7px;
  width: 74px;
  height: 22px;
  margin: 5px 0 0 4px;
  border: 1px solid #e3e6e8;
  border-radius: 11px;
  color: #5c7080;
}
.rooms svg {
  width: 15px;
  height: 15px;
}
.inset .props {
  padding-bottom: 1px;
}
.inset .props-head {
  height: 37px;
  padding: 3px 9px 0 7px;
}
.inset h2 {
  font-size: 12px;
  line-height: 17px;
}
.inset .i20 {
  width: 14px;
  height: 14px;
}
.inset .props-bar {
  gap: 6px;
  height: 32px;
  padding: 3px 4px 0 3px;
}
.inset .count {
  gap: 5px;
  width: 50px;
  height: 22px;
  margin-top: 2px;
}
.inset .count svg {
  width: 13px;
  height: 8px;
}
.history {
  display: flex;
  align-items: center;
  justify-content: center;
  width: 31px;
  height: 22px;
  margin-top: 2px;
  border: 1px solid #e3e6e8;
  border-radius: 11px;
}
.history svg {
  width: 14px;
  height: 14px;
}
.inset .toggle {
  width: 55px;
  height: 28px;
  border-radius: 3px;
}
.inset .toggle svg {
  width: 16px;
  height: 17px;
}
.inset .ptable {
  font-size: 12px;
}
.inset .ptable th {
  height: 25px;
  padding-left: 3px;
}
.inset .ptable th:first-child {
  width: 144px;
}
.inset .ptable td {
  height: 29px;
  padding-left: 1px;
}
.inset .ptable td:first-child {
  padding-left: 22px;
}
.inset .ptable .child td:first-child {
  padding-left: 42px;
}
.inset .ptable .tall td {
  height: 42px;
  line-height: 17px;
}
.inset .ptable .tall td:first-child {
  padding-right: 24px;
}
.inset .arrow {
  left: 7px;
  width: 6px;
  height: 7px;
  margin-top: -3px;
}
.cell {
  display: flex;
  align-items: center;
  justify-content: space-between;
}
.row-actions {
  position: relative;
  display: flex;
  align-items: center;
  gap: 3px;
  margin-right: 7px;
}
.row-actions button {
  display: flex;
  align-items: center;
  justify-content: center;
  width: 14px;
  height: 20px;
}
.row-actions button svg {
  width: 14px;
  height: 15px;
}
.row-actions .round {
  width: 20px;
  border-radius: 10px;
  background: #edeff0;
}
.row-actions .round svg {
  width: 12px;
  height: 12px;
}
.tip {
  position: absolute;
  right: -34px;
  bottom: 28px;
  width: 88px;
  border-radius: 5px;
  background: #fff;
  box-shadow: 0 1px 8px rgba(0, 0, 0, 0.3);
  line-height: 34px;
  text-align: center;
  white-space: nowrap;
}
.tip::after {
  position: absolute;
  top: 34px;
  left: 37px;
  border: 7px solid transparent;
  border-top-color: #fff;
  border-bottom: 0;
  content: "";
}
.hand {
  position: absolute;
  top: 14px;
  right: -3px;
  width: 13px;
  height: 16px;
}
.frame {
  position: absolute;
  inset: 2px 1px 1px -2px;
  border: 5px solid #f00;
}
.callout {
  position: absolute;
  inset: 0;
  width: 100%;
  height: 100%;
  pointer-events: none;
  filter: drop-shadow(3px 4px 2px rgba(0, 0, 0, 0.4));
}
</style>
